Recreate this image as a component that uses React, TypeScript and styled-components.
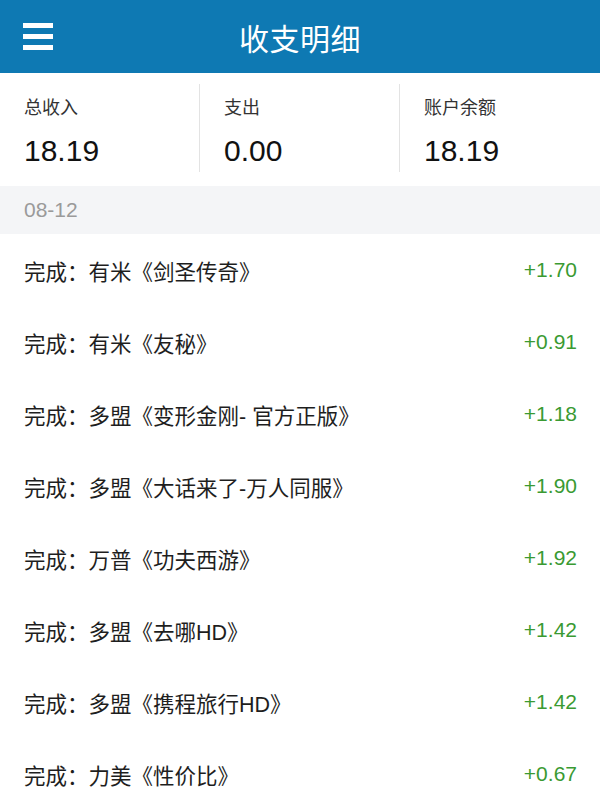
import React from "react";
import styled, { createGlobalStyle } from "styled-components";

const GlobalStyle = createGlobalStyle`
  html, body {
    margin: 0;
    padding: 0;
    background: #ffffff;
  }
  body {
    font-family: "Liberation Sans", "Noto Sans CJK SC", sans-serif;
    -webkit-font-smoothing: antialiased;
  }
`;

const Page = styled.div`
  width: 600px;
  height: 800px;
  overflow: hidden;
  background: #ffffff;
`;

const Header = styled.header`
  position: relative;
  height: 73px;
  background: #0e79b3;
  display: flex;
  align-items: center;
  justify-content: center;
`;

const MenuButton = styled.button`
  position: absolute;
  left: 23px;
  top: 23px;
  width: 30px;
  height: 27px;
  padding: 0;
  border: none;
  background: transparent;
  display: flex;
  flex-direction: column;
  justify-content: space-between;
  cursor: pointer;
`;

const MenuBar = styled.span`
  display: block;
  width: 30px;
  height: 5px;
  background: #ffffff;
`;

const Title = styled.h1`
  margin: 0;
  color: #ffffff;
  font-family: "Noto Sans CJK SC", sans-serif;
  font-weight: 400;
  font-size: 30px;
  line-height: 36px;
  letter-spacing: 0.5px;
`;

const Summary = styled.section`
  display: grid;
  grid-template-columns: repeat(3, 1fr);
  padding: 11px 0 14px;
  background: #ffffff;
`;

const Stat = styled.div<{ $divider?: boolean }>`
  padding: 10px 0 0 24px;
  height: 88px;
  box-sizing: border-box;
  border-left: ${(p) => (p.$divider ? "1px solid #e3e3e3" : "1px solid transparent")};
  margin-left: -1px;
`;

const StatLabel = styled.div`
  font-family: "Noto Sans CJK SC", sans-serif;
  font-size: 18px;
  line-height: 24px;
  color: #333333;
`;

const StatValue = styled.div`
  margin-top: 15px;
  font-size: 30px;
  line-height: 36px;
  color: #111111;
`;

const DateBar = styled.div`
  height: 48px;
  background: #f4f5f7;
  display: flex;
  align-items: center;
  padding-left: 24px;
  font-size: 21px;
  color: #9a9a9a;
`;

const List = styled.ul`
  margin: 0;
  padding: 0;
  list-style: none;
`;

const Row = styled.li`
  height: 72px;
  display: flex;
  align-items: center;
  justify-content: space-between;
  padding: 0 23px 0 24px;
`;

const RowText = styled.span`
  font-size: 21.5px;
  color: #1e1e1e;
  white-space: nowrap;
`;

const Amount = styled.span`
  font-size: 21px;
  color: #3a9a32;
`;

const stats = [
  { label: "总收入", value: "18.19" },
  { label: "支出", value: "0.00" },
  { label: "账户余额", value: "18.19" },
];

const items = [
  { text: "完成：有米《剑圣传奇》", amount: "+1.70" },
  { text: "完成：有米《友秘》", amount: "+0.91" },
  { text: "完成：多盟《变形金刚- 官方正版》", amount: "+1.18" },
  { text: "完成：多盟《大话来了-万人同服》", amount: "+1.90" },
  { text: "完成：万普《功夫西游》", amount: "+1.92" },
  { text: "完成：多盟《去哪HD》", amount: "+1.42" },
  { text: "完成：多盟《携程旅行HD》", amount: "+1.42" },
  { text: "完成：力美《性价比》", amount: "+0.67" },
];

export default function App() {
  return (
    <>
      <GlobalStyle />
      <Page>
        <Header>
          <MenuButton aria-label="菜单">
            <MenuBar />
            <MenuBar />
            <MenuBar />
          </MenuButton>
          <Title>收支明细</Title>
        </Header>
        <Summary>
          {stats.map((s, i) => (
            <Stat key={s.label} $divider={i > 0}>
              <StatLabel>{s.label}</StatLabel>
              <StatValue>{s.value}</StatValue>
            </Stat>
          ))}
        </Summary>
        <DateBar>08-12</DateBar>
        <List>
          {items.map((it, i) => (
            <Row key={i}>
              <RowText>{it.text}</RowText>
              <Amount>{it.amount}</Amount>
            </Row>
          ))}
        </List>
      </Page>
    </>
  );
}
